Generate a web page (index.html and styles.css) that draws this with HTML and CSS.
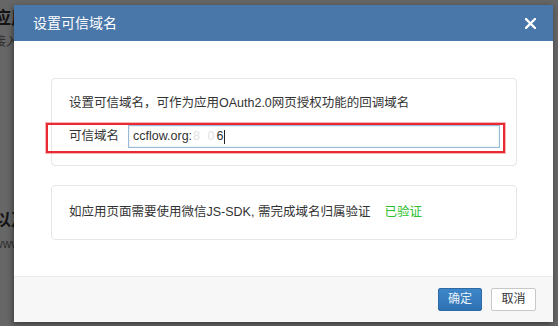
FILE: index.html
```html
<!DOCTYPE html>
<html lang="zh-CN">
<head>
    <meta charset="UTF-8">
    <title>设置可信域名</title>
    <link rel="stylesheet" href="styles.css">
</head>
<body>
    <div class="page">
        <div class="app-title">应用</div>
        <div class="app-note">接入的应用</div>
        <div class="app-title lower">以及</div>
        <div class="app-note">www.ccflow.org</div>
    </div>

    <div class="mask">
        <div class="modal">
            <div class="modal-header">
                <span class="modal-title">设置可信域名</span>
                <button class="close" type="button">
                    <svg width="11" height="11" viewBox="0 0 11 11">
                        <path d="M1 1 L10 10 M10 1 L1 10" stroke="#fff" stroke-width="2.3" stroke-linecap="square"/>
                    </svg>
                </button>
            </div>

            <div class="modal-body">
                <div class="panel">
                    <div class="panel-text">设置可信域名，可作为应用OAuth2.0网页授权功能的回调域名</div>
                    <div class="domain-row">
                        <label class="domain-label">可信域名</label>
                        <div class="domain-input">ccflow.org:<span class="masked">8 0</span>6<span class="caret"></span></div>
                    </div>
                </div>

                <div class="panel panel-verify">
                    如应用页面需要使用微信JS-SDK, 需完成域名归属验证<span class="verified">已验证</span>
                </div>
            </div>

            <div class="modal-footer">
                <button class="btn btn-primary" type="button">确定</button>
                <button class="btn" type="button">取消</button>
            </div>
        </div>
    </div>
</body>
</html>
```

FILE: styles.css
```css
* {
    margin: 0;
    padding: 0;
    box-sizing: border-box;
}

body {
    width: 558px;
    height: 326px;
    overflow: hidden;
    background: #fff;
    color: #333;
    font-family: "Liberation Sans", "Noto Sans CJK SC", sans-serif;
    font-size: 12.5px;
    position: relative;
}

/* page behind the dialog */
.page {
    padding: 8px 0 0 0;
    margin-left: -6px;
}

.app-title {
    font-size: 17px;
    font-weight: bold;
    line-height: 22px;
}

.app-title.lower {
    margin-top: 156px;
}

.app-note {
    font-size: 12px;
    line-height: 24px;
    color: #777;
}

.mask {
    position: absolute;
    inset: 0;
    background: rgba(0, 0, 0, 0.6);
    padding: 5px 6px 4px 14px;
}

.modal {
    width: 539px;
    height: 317px;
    background: #fff;
    box-shadow: -1px 2px 6px rgba(0, 0, 0, 0.45);
    display: flex;
    flex-direction: column;
}

.modal-header {
    height: 36px;
    background: #4a77a9;
    display: flex;
    align-items: center;
    justify-content: space-between;
    padding: 0 17px 0 19px;
}

.modal-title {
    color: #fff;
    font-size: 14px;
    line-height: 20px;
}

.close {
    background: none;
    border: none;
    width: 11px;
    height: 11px;
    display: flex;
    margin-top: 1px;
}

.modal-body {
    flex: 1;
    padding: 37px 36px 0 37px;
}

.panel {
    border: 1px solid #e6e6e6;
    border-radius: 4px;
    padding: 15px 0 12px 0;
}

.panel-text {
    line-height: 18px;
    padding-left: 17px;
}

.domain-row {
    margin: 11px 11px 0 -6px;
    border: 2px solid #ea2a33;
    box-shadow: 0 0 0 1px rgba(234, 42, 51, 0.35);
    height: 30px;
    display: flex;
    align-items: flex-start;
    padding: 0 3px 0 21px;
}

.domain-label {
    line-height: 23px;
    width: 59px;
    flex-shrink: 0;
}

.domain-input {
    flex: 1;
    height: 23px;
    border: 1px solid #9cbad8;
    box-shadow: inset 0 0 2px rgba(102, 153, 204, 0.4);
    line-height: 21px;
    padding-left: 4px;
    font-size: 12.5px;
    display: flex;
    align-items: center;
}

.masked {
    color: #e2e2e2;
    letter-spacing: 2px;
    padding-left: 1px;
}

.caret {
    width: 1px;
    height: 14px;
    background: #222;
    margin-left: 1px;
}

.panel-verify {
    margin-top: 19px;
    padding: 17px 17px 18px 17px;
    line-height: 18px;
}

.verified {
    color: #2fbf2f;
    margin-left: 14px;
}

.modal-footer {
    height: 46px;
    background: #f7f7f7;
    border-top: 1px solid #ebebeb;
    display: flex;
    justify-content: flex-end;
    align-items: flex-start;
    gap: 9px;
    padding: 11px 17px 0 0;
}

.btn {
    width: 45px;
    height: 23px;
    border: 1px solid #c8c8c8;
    border-radius: 2px;
    background: #fff;
    color: #333;
    font-family: inherit;
    font-size: 12px;
    line-height: 21px;
}

.btn-primary {
    width: 44px;
    background: linear-gradient(#3d86c8, #2f72b4);
    border-color: #2c6aa6;
    color: #eaf2fa;
}
```
